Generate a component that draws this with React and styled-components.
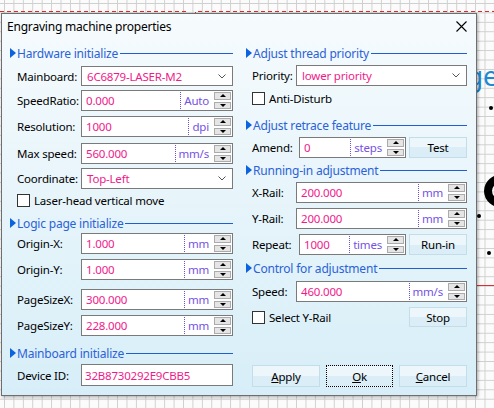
import styled, { createGlobalStyle } from "styled-components";

const GlobalStyle = createGlobalStyle`
  html, body {
    margin: 0;
    padding: 0;
  }
  body {
    font-family: "Noto Sans", "Open Sans", sans-serif;
    font-size: 11.5px;
    letter-spacing: -0.2px;
    color: #000;
  }
`;

const Desktop = styled.div`
  position: relative;
  width: 494px;
  height: 408px;
  overflow: hidden;
  background-color: #fbfbfb;
  background-image:
    linear-gradient(to right, #cfcfcf 1px, transparent 1px),
    linear-gradient(to bottom, #cfcfcf 1px, transparent 1px);
  background-size: 9.43px 9.43px;
  background-position: 4px 3px;
`;

const Backdrop = styled.svg`
  position: absolute;
  left: 0;
  top: 0;
`;

const Window = styled.div`
  position: absolute;
  left: 1px;
  top: 13px;
  width: 476px;
  height: 383px;
  box-sizing: border-box;
  border: 1px solid #6e6e6e;
  background: linear-gradient(#f6fbfd, #d7eef8);
  box-shadow: 1px 1px 3px rgba(0, 0, 0, 0.35);
  display: flex;
  flex-direction: column;
`;

const TitleBar = styled.div`
  height: 24px;
  display: flex;
  align-items: center;
  justify-content: space-between;
  padding: 0 9px 0 5px;
  font-size: 12px;
`;

const Body = styled.div`
  display: flex;
  gap: 13px;
  padding: 8px 9px 0 8px;
`;

const Column = styled.div`
  width: ${p => p.$w}px;
  display: flex;
  flex-direction: column;
`;

const SectionHead = styled.div`
  display: flex;
  align-items: center;
  height: 14px;
  margin-top: ${p => p.$mt || 0}px;
  color: #2a62d8;
  font-size: 12px;
`;

const Arrow = styled.span`
  width: 0;
  height: 0;
  border-top: 5px solid transparent;
  border-bottom: 5px solid transparent;
  border-left: 6px solid #0b63e0;
  margin-right: 1px;
`;

const HeadText = styled.span`
  white-space: nowrap;
  padding-right: 2px;
`;

const HeadRule = styled.span`
  flex: 1;
  height: 1px;
  background: #1f5fd3;
`;

const Row = styled.div`
  display: flex;
  align-items: center;
  height: ${p => p.$h || 21}px;
  margin-top: ${p => p.$mt || 0}px;
  gap: ${p => p.$gap || 0}px;
  justify-content: ${p => p.$justify || "flex-start"};
`;

const Label = styled.span`
  width: ${p => p.$w}px;
  padding-left: ${p => p.$indent}px;
  box-sizing: border-box;
  flex-shrink: 0;
  white-space: nowrap;
`;

const Field = styled.div`
  flex: ${p => (p.$w ? `0 0 ${p.$w}px` : 1)};
  align-self: stretch;
  display: flex;
  align-items: stretch;
  border: 1px solid #7a7a7a;
  background: #fff;
  box-sizing: border-box;
  min-width: 0;
`;

const Value = styled.span`
  flex: 1;
  display: flex;
  align-items: center;
  padding-left: ${p => p.$pad ?? 4}px;
  color: #f01a8a;
  white-space: nowrap;
`;

const Unit = styled.span`
  display: flex;
  align-items: center;
  margin: 1px 0;
  border-left: 1px dotted #6b4fe0;
  padding: 0 5px 0 3px;
  color: #7452e4;
`;

const Spinner = styled.div`
  width: 17px;
  display: flex;
  flex-direction: column;
  gap: 2px;
  padding: 1px 1px 1px 0;
`;

const SpinButton = styled.span`
  flex: 1;
  background: #e5e5e5;
  border: 1px solid #ababab;
  display: flex;
  align-items: center;
  justify-content: center;
  &::after {
    content: "";
    border-left: 3px solid transparent;
    border-right: 3px solid transparent;
    ${p => (p.$down ? "border-top: 3px solid #000;" : "border-bottom: 3px solid #000;")}
  }
`;

const Combo = styled.div`
  flex: 1;
  align-self: stretch;
  display: flex;
  align-items: center;
  justify-content: space-between;
  border: 1px solid #7a7a7a;
  background: #fff;
  padding: 0 6px 0 5px;
  color: #f01a8a;
`;

const Check = styled.div`
  display: flex;
  align-items: center;
  gap: 4px;
  padding-left: ${p => p.$indent}px;
  height: 13px;
  margin-top: ${p => p.$mt || 0}px;
`;

const Box = styled.span`
  width: 13px;
  height: 13px;
  box-sizing: border-box;
  border: 1px solid #333;
  background: #fff;
`;

const Button = styled.button`
  width: ${p => p.$w || 58}px;
  height: ${p => p.$h || 21}px;
  flex-shrink: 0;
  font: inherit;
  letter-spacing: inherit;
  color: #000;
  padding: 0;
  background: linear-gradient(#edf6fa 0 50%, #dbedf6 50% 100%);
  border: 1px ${p => (p.$focus ? "dotted #000" : "solid #c3dde9")};
`;

const ButtonBar = styled.div`
  display: flex;
  gap: 6px;
  padding-left: 6px;
  margin-top: ${p => p.$mt || 0}px;
`;

function Chevron() {
  return (
    <svg width="8" height="5" viewBox="0 0 8 5">
      <polyline points="0.5,0.5 4,4 7.5,0.5" fill="none" stroke="#555" strokeWidth="1" />
    </svg>
  );
}

function CloseIcon() {
  return (
    <svg width="11" height="11" viewBox="0 0 11 11">
      <path d="M0.5 0.5 L10.5 10.5 M10.5 0.5 L0.5 10.5" stroke="#000" strokeWidth="1.1" />
    </svg>
  );
}

function Section({ title, mt }) {
  return (
    <SectionHead $mt={mt}>
      <Arrow />
      <HeadText>{title}</HeadText>
      <HeadRule />
    </SectionHead>
  );
}

function SpinField({ value, unit, w }) {
  return (
    <Field $w={w}>
      <Value>{value}</Value>
      <Unit>{unit}</Unit>
      <Spinner>
        <SpinButton />
        <SpinButton $down />
      </Spinner>
    </Field>
  );
}

const LEFT = { w: 71, indent: 7 };
const RIGHT = { w: 50, indent: 6 };

function SpinRow({ label, value, unit, mt, side = LEFT }) {
  return (
    <Row $mt={mt}>
      <Label $w={side.w} $indent={side.indent}>{label}</Label>
      <SpinField value={value} unit={unit} />
    </Row>
  );
}

function ComboRow({ label, value, mt, side = LEFT, h }) {
  return (
    <Row $mt={mt} $h={h}>
      <Label $w={side.w} $indent={side.indent}>{label}</Label>
      <Combo>
        <span>{value}</span>
        <Chevron />
      </Combo>
    </Row>
  );
}

export default function App() {
  return (
    <>
      <GlobalStyle />
      <Desktop>
        <Backdrop width="494" height="408" viewBox="0 0 494 408">
          <path d="M0 11.5 H186.5 V30 M195.5 30 V11.5 H494" fill="none" stroke="#e02a2a" strokeDasharray="4 3" />
          <line x1="476" y1="285.5" x2="494" y2="285.5" stroke="#d93030" />
          <text x="498" y="86" textAnchor="end" fill="#1b8ad2" fontSize="27" fontFamily="Noto Sans, sans-serif">ge</text>
          <ellipse cx="503" cy="191" rx="15" ry="13" fill="none" stroke="#000" strokeWidth="8" />
          <circle cx="491" cy="108" r="2" fill="#000" />
          <circle cx="479" cy="216" r="2" fill="#000" />
          <circle cx="489" cy="253" r="2" fill="#000" />
        </Backdrop>

        <Window>
          <TitleBar>
            <span>Engraving machine properties</span>
            <CloseIcon />
          </TitleBar>
          <Body>
            <Column $w={223}>
              <Section title="Hardware initialize" />
              <ComboRow label="Mainboard:" value="6C6879-LASER-M2" mt={6} h={20} />
              <SpinRow label="SpeedRatio:" value="0.000" unit="Auto" mt={4} />
              <SpinRow label="Resolution:" value="1000" unit="dpi" mt={5} />
              <SpinRow label="Max speed:" value="560.000" unit="mm/s" mt={6} />
              <ComboRow label="Coordinate:" value="Top-Left" mt={4} />
              <Check $indent={7} $mt={5}>
                <Box />
                <span>Laser-head vertical move</span>
              </Check>

              <Section title="Logic page initialize" mt={9} />
              <SpinRow label="Origin-X:" value="1.000" unit="mm" mt={3} />
              <SpinRow label="Origin-Y:" value="1.000" unit="mm" mt={5} />
              <SpinRow label="PageSizeX:" value="300.000" unit="mm" mt={9} />
              <SpinRow label="PageSizeY:" value="228.000" unit="mm" mt={5} />

              <Section title="Mainboard initialize" mt={10} />
              <Row $mt={4} $h={22}>
                <Label $w={LEFT.w} $indent={LEFT.indent}>Device ID:</Label>
                <Field>
                  <Value $pad={3}>32B8730292E9CBB5</Value>
                </Field>
              </Row>
            </Column>

            <Column $w={221}>
              <Section title="Adjust thread priority" />
              <ComboRow label="Priority:" value="lower priority" mt={5} side={RIGHT} />
              <Check $indent={6} $mt={6}>
                <Box />
                <span>Anti-Disturb</span>
              </Check>

              <Section title="Adjust retrace feature" mt={13} />
              <Row $mt={5} $gap={3}>
                <Label $w={RIGHT.w} $indent={RIGHT.indent}>Amend:</Label>
                <SpinField value="0" unit="steps" />
                <Button>Test</Button>
              </Row>

              <Section title="Running-in adjustment" mt={5} />
              <SpinRow label="X-Rail:" value="200.000" unit="mm" mt={5} side={RIGHT} />
              <SpinRow label="Y-Rail:" value="200.000" unit="mm" mt={5} side={RIGHT} />
              <Row $mt={5} $gap={3}>
                <Label $w={RIGHT.w} $indent={RIGHT.indent}>Repeat:</Label>
                <SpinField value="1000" unit="times" />
                <Button>Run-in</Button>
              </Row>

              <Section title="Control for adjustment" mt={6} />
              <SpinRow label="Speed:" value="460.000" unit="mm/s" mt={6} side={RIGHT} />
              <Row $mt={5} $h={20} $justify="space-between">
                <Check $indent={6}>
                  <Box />
                  <span>Select Y-Rail</span>
                </Check>
                <Button $h={20}>Stop</Button>
              </Row>

              <ButtonBar $mt={38}>
                <Button $w={68} $h={22}><u>A</u>pply</Button>
                <Button $w={67} $h={22} $focus><u>O</u>k</Button>
                <Button $w={68} $h={22}><u>C</u>ancel</Button>
              </ButtonBar>
            </Column>
          </Body>
        </Window>
      </Desktop>
    </>
  );
}
